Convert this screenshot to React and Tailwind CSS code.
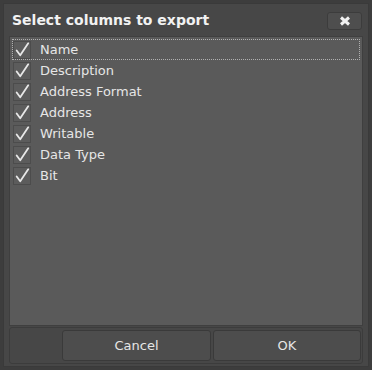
import { useState } from "react";

const COLUMNS = ["Name", "Description", "Address Format", "Address", "Writable", "Data Type", "Bit"];

function Check() {
  return (
    <span className="w-[18px] h-[18px] border border-[#4c4c4c] bg-[#5c5c5c] flex items-center justify-center shrink-0">
      <svg width="18" height="18" viewBox="0 0 18 18">
        <path d="M3 9.5 L7 15 L16 1.5" fill="none" stroke="#e8e8e8" strokeWidth="2" strokeLinecap="round" strokeLinejoin="round" />
      </svg>
    </span>
  );
}

export default function App() {
  const [checked] = useState(COLUMNS.map(() => true));

  return (
    <div
      className="w-[372px] h-[370px] bg-[#3d3d3d] p-[3px] overflow-hidden"
      style={{ fontFamily: '"DejaVu Sans", "Open Sans", sans-serif' }}
    >
      <div className="w-full h-[364px] bg-[#474747] border border-[#3a3a3a] flex flex-col">
        {/* title bar */}
        <div className="h-[32px] flex items-center justify-between pl-[8px] pr-[6px] pt-[1px]">
          <span className="text-[14px] font-bold text-[#f2f2f2]">Select columns to export</span>
          <button className="w-[35px] h-[18px] rounded-[3px] bg-[#4e4e4e] border border-[#3c3c3c] flex items-center justify-center">
            <svg width="12" height="10" viewBox="0 0 12 10">
              <path d="M2 1.5 L10 8.5 M10 1.5 L2 8.5" stroke="#f0f0f0" strokeWidth="3" />
            </svg>
          </button>
        </div>

        {/* list */}
        <div className="mx-[5px] h-[290px] bg-[#5a5a5a] border border-[#3f3f3f] pt-[2px] px-[2px]">
          {COLUMNS.map((c, i) => (
            <div
              key={c}
              className={`h-[21px] flex items-center gap-[9px] ${
                i === 0 ? "border border-dotted border-[#b0b0b0]" : "border border-transparent"
              }`}
            >
              {checked[i] && <Check />}
              <span className="text-[13px] text-[#e6e6e6] leading-none">{c}</span>
            </div>
          ))}
        </div>

        {/* footer */}
        <div className="mx-[5px] mt-[1px] mb-[2px] flex-1 border border-[#3c3c3c] rounded-[3px] flex justify-end items-center gap-[2px] pr-[1px]">
          <button className="w-[149px] h-[31px] rounded-[3px] bg-[#4d4d4d] border border-[#3a3a3a] text-[13px] text-[#e6e6e6]">
            Cancel
          </button>
          <button className="w-[148px] h-[31px] rounded-[3px] bg-[#4d4d4d] border border-[#3a3a3a] text-[13px] text-[#e6e6e6]">
            OK
          </button>
        </div>
      </div>
    </div>
  );
}
